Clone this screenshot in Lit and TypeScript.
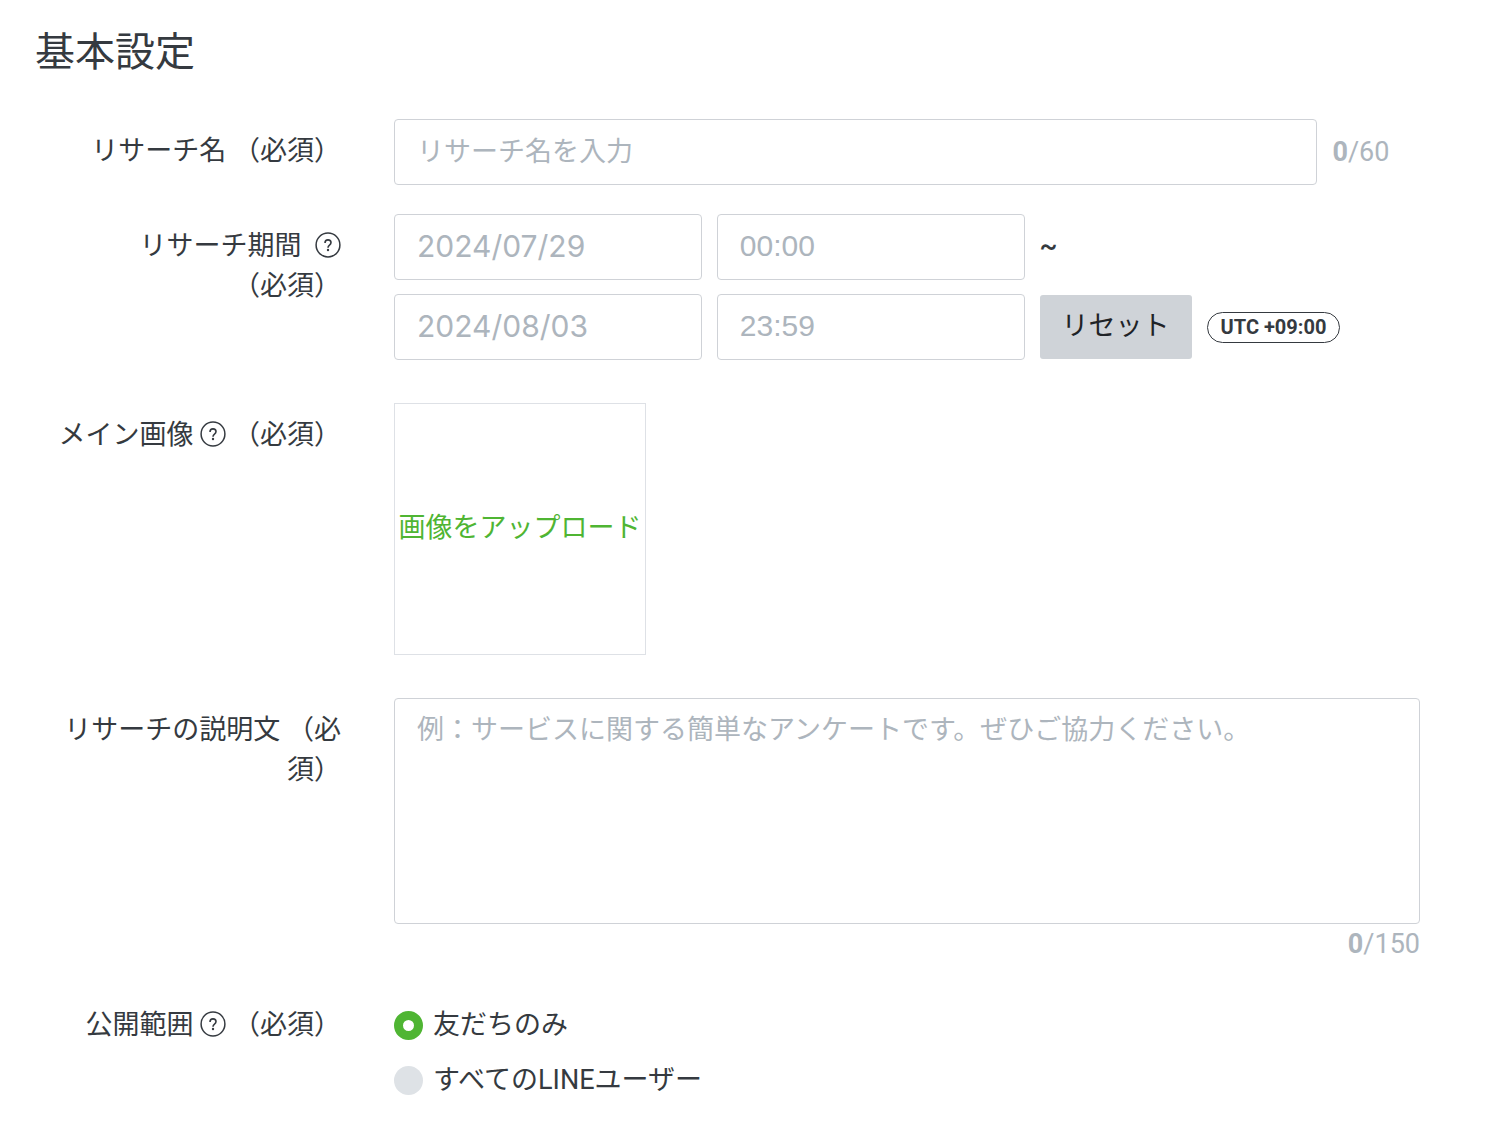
import { LitElement, html, css, svg } from "lit";
import { customElement, state } from "lit/decorators.js";

@customElement("help-icon")
export class HelpIcon extends LitElement {
  static styles = css`
    :host {
      display: inline-block;
      width: 26px;
      height: 26px;
      vertical-align: -3px;
    }
    .icon {
      display: block;
      width: 26px;
      height: 26px;
      fill: none;
      stroke: currentColor;
    }
    .dot {
      fill: currentColor;
      stroke: none;
    }
  `;

  render() {
    return html`<svg class="icon" viewBox="0 0 26 26" role="img" aria-label="ヘルプ">
      ${svg`<circle cx="13" cy="13" r="11.9" stroke-width="1.5"></circle>
      <path d="M10 10.9C10 9.1 11.2 7.9 13 7.9s3 1.1 3 2.7c0 1.2-.6 1.9-1.5 2.6-1 .8-1.5 1.3-1.5 2.5" stroke-width="1.6"></path>
      <circle class="dot" cx="13" cy="18" r="1.2"></circle>`}
    </svg>`;
  }
}

@customElement("app-root")
export class AppRoot extends LitElement {
  @state() private researchName = "";
  @state() private description = "";
  @state() private audience = "friends";

  static styles = css`
    :host {
      display: block;
      box-sizing: border-box;
      min-height: 100vh;
      padding: 26px 80px 32px 35px;
      background: #fff;
      color: #353a40;
      font-family: Roboto, "Noto Sans CJK JP", sans-serif;
      font-size: 27px;
      line-height: 40px;
      text-spacing-trim: space-all;
    }
    *,
    *::before {
      box-sizing: border-box;
    }
    .heading {
      margin: 0 0 39px;
      font-size: 40px;
      line-height: 54px;
      font-weight: 400;
    }
    .form {
      display: flex;
      flex-direction: column;
      gap: 29px;
    }
    .row {
      display: grid;
      grid-template-columns: 306px minmax(0, 1fr);
      column-gap: 53px;
      align-items: start;
    }
    .label {
      padding-top: 12px;
      text-align: right;
    }
    .together {
      white-space: nowrap;
    }
    .line {
      display: flex;
      align-items: center;
      gap: 15px;
    }
    .period,
    .upload-area {
      display: flex;
      flex-direction: column;
      gap: 14px;
      padding-bottom: 14px;
    }
    .field {
      display: block;
      width: 100%;
      height: 66px;
      margin: 0;
      padding: 0 22px;
      border: 1px solid #cfd2d7;
      border-radius: 4px;
      background: #fff;
      color: #353a40;
      font: inherit;
      outline: none;
    }
    .field:focus {
      border-color: #4fb533;
    }
    .field::placeholder {
      color: #adb5bd;
      opacity: 1;
    }
    .name {
      width: 90%;
      flex: none;
    }
    .date,
    .time {
      width: 30%;
      flex: none;
      padding-bottom: 2px;
      font-size: 30px;
    }
    .date {
      font-family: Inter, sans-serif;
    }
    .time {
      font-family: "Liberation Sans", sans-serif;
    }
    .description {
      height: 226px;
      padding: 11px 22px;
      line-height: 40px;
      resize: none;
    }
    .counter {
      color: #adb5bd;
    }
    .under {
      display: block;
      text-align: right;
    }
    .tilde {
      padding-bottom: 2px;
      font-weight: 500;
    }
    .reset {
      height: 64px;
      padding: 0 22px 2px;
      border: 0;
      border-radius: 3px;
      background: #cfd3d8;
      color: #1f2327;
      font: inherit;
      white-space: nowrap;
      cursor: pointer;
    }
    .zone {
      padding: 0 13px;
      border: 1px solid #353a40;
      border-radius: 16px;
      font-size: 20px;
      line-height: 29px;
      font-weight: 700;
      white-space: nowrap;
    }
    .upload {
      width: 252px;
      height: 252px;
      padding: 0 0 2px;
      border: 1px solid #dee1e6;
      background: #fff;
      color: #4fb533;
      font: inherit;
      white-space: nowrap;
      cursor: pointer;
    }
    .choices {
      display: flex;
      flex-direction: column;
      gap: 15px;
      padding-top: 12px;
    }
    .choice {
      display: flex;
      align-items: center;
      gap: 10px;
    }
    .radio {
      appearance: none;
      flex: none;
      width: 29px;
      height: 29px;
      margin: 0;
      border-radius: 50%;
      background: #dee2e6;
    }
    .radio:checked {
      border: 9px solid #4fb533;
      background: #fff;
    }
  `;

  private onName(e: Event) {
    this.researchName = (e.target as HTMLInputElement).value;
  }

  private onDescription(e: Event) {
    this.description = (e.target as HTMLTextAreaElement).value;
  }

  private onReset() {
    this.renderRoot
      .querySelectorAll<HTMLInputElement>(".date, .time")
      .forEach((field) => (field.value = ""));
  }

  private choice(value: string, text: string) {
    return html`<label class="choice">
      <input class="radio" type="radio" name="audience" value=${value}
        .checked=${this.audience === value}
        @change=${() => (this.audience = value)} />
      <span>${text}</span>
    </label>`;
  }

  render() {
    return html`
      <h1 class="heading">基本設定</h1>
      <form class="form" @submit=${(e: Event) => e.preventDefault()}>
        <div class="row">
          <label class="label" for="name">リサーチ名 （必須）</label>
          <div class="line">
            <input class="field name" id="name" type="text" maxlength="60"
              placeholder="リサーチ名を入力" @input=${this.onName} />
            <span class="counter"><b>${this.researchName.length}</b>/60</span>
          </div>
        </div>

        <div class="row" role="group" aria-labelledby="period-label">
          <div class="label" id="period-label">リサーチ期間&nbsp; <help-icon></help-icon> <span class="together">（必須）</span></div>
          <div class="period">
            <div class="line">
              <input class="field date" type="text" aria-label="開始日" placeholder="2024/07/29" />
              <input class="field time" type="text" aria-label="開始時刻" placeholder="00:00" />
              <span class="tilde">~</span>
            </div>
            <div class="line">
              <input class="field date" type="text" aria-label="終了日" placeholder="2024/08/03" />
              <input class="field time" type="text" aria-label="終了時刻" placeholder="23:59" />
              <button class="reset" type="button" @click=${this.onReset}>リセット</button>
              <span class="zone">UTC +09:00</span>
            </div>
          </div>
        </div>

        <div class="row">
          <label class="label" for="upload">メイン画像 <help-icon></help-icon> （必須）</label>
          <div class="upload-area">
            <button class="upload" id="upload" type="button">画像をアップロード</button>
          </div>
        </div>

        <div class="row">
          <label class="label" for="description">リサーチの説明文 （必須）</label>
          <div>
            <textarea class="field description" id="description" maxlength="150"
              placeholder="例：サービスに関する簡単なアンケートです。ぜひご協力ください。"
              @input=${this.onDescription}></textarea>
            <span class="counter under"><b>${this.description.length}</b>/150</span>
          </div>
        </div>

        <div class="row" role="radiogroup" aria-labelledby="audience-label">
          <div class="label" id="audience-label">公開範囲 <help-icon></help-icon> （必須）</div>
          <div class="choices">
            ${this.choice("friends", "友だちのみ")}
            ${this.choice("all", "すべてのLINEユーザー")}
          </div>
        </div>
      </form>
    `;
  }
}
